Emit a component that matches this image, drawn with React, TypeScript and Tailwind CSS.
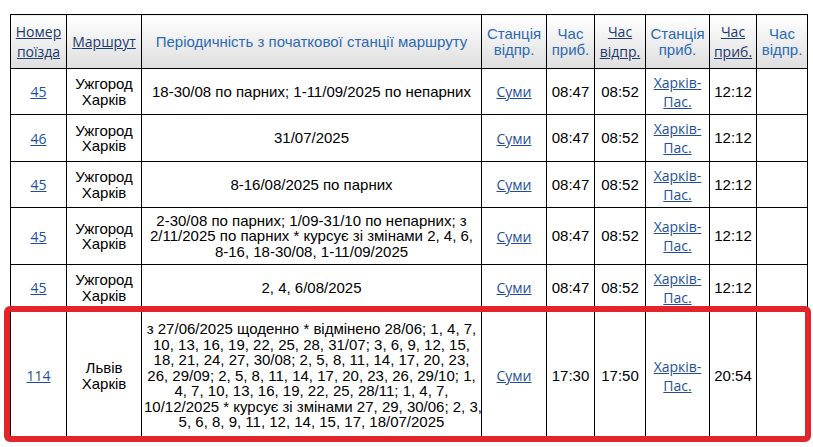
import React from "react";

const ARIAL = "font-['Liberation_Sans',Arial,sans-serif]";
const LINK = "font-['Open_Sans','Noto_Sans',sans-serif] text-[14px] leading-[19px] underline text-[#1f4f9b]";
const HLINK = "font-['Open_Sans','Noto_Sans',sans-serif] text-[14px] leading-[20px] underline text-[#1c3a6c]";
const HTEXT = `${ARIAL} text-[15px] leading-[15.5px] text-[#2d6ab3]`;

const th = "border border-black bg-gradient-to-b from-white to-[#dedede] font-normal text-center align-middle px-[2px]";
const td = "border border-black text-center align-middle px-[2px]";

type Row = {
  num: string;
  route: string[];
  period: string[];
  dep: string;
  t1: string;
  t2: string;
  t3: string;
  h: string;
};

const rows: Row[] = [
  { num: "45", route: ["Ужгород", "Харків"], period: ["18-30/08 по парних; 1-11/09/2025 по непарних"], dep: "Суми", t1: "08:47", t2: "08:52", t3: "12:12", h: "h-[46px]" },
  { num: "46", route: ["Ужгород", "Харків"], period: ["31/07/2025"], dep: "Суми", t1: "08:47", t2: "08:52", t3: "12:12", h: "h-[47px]" },
  { num: "45", route: ["Ужгород", "Харків"], period: ["8-16/08/2025 по парних"], dep: "Суми", t1: "08:47", t2: "08:52", t3: "12:12", h: "h-[46px]" },
  {
    num: "45",
    route: ["Ужгород", "Харків"],
    period: [
      "2-30/08 по парних; 1/09-31/10 по непарних; з",
      "2/11/2025 по парних * курсує зі змінами 2, 4, 6,",
      "8-16, 18-30/08, 1-11/09/2025",
    ],
    dep: "Суми",
    t1: "08:47",
    t2: "08:52",
    t3: "12:12",
    h: "h-[57px]",
  },
  { num: "45", route: ["Ужгород", "Харків"], period: ["2, 4, 6/08/2025"], dep: "Суми", t1: "08:47", t2: "08:52", t3: "12:12", h: "h-[46px]" },
  {
    num: "114",
    route: ["Львів", "Харків"],
    period: [
      "з 27/06/2025 щоденно * відмінено 28/06; 1, 4, 7,",
      "10, 13, 16, 19, 22, 25, 28, 31/07; 3, 6, 9, 12, 15,",
      "18, 21, 24, 27, 30/08; 2, 5, 8, 11, 14, 17, 20, 23,",
      "26, 29/09; 2, 5, 8, 11, 14, 17, 20, 23, 26, 29/10; 1,",
      "4, 7, 10, 13, 16, 19, 22, 25, 28/11; 1, 4, 7,",
      "10/12/2025 * курсує зі змінами 27, 29, 30/06; 2, 3,",
      "5, 6, 8, 9, 11, 12, 14, 15, 17, 18/07/2025",
    ],
    dep: "Суми",
    t1: "17:30",
    t2: "17:50",
    t3: "20:54",
    h: "h-[130px]",
  },
];

function Lines({ lines }: { lines: string[] }) {
  return (
    <>
      {lines.map((l, i) => (
        <React.Fragment key={i}>
          {i > 0 && <br />}
          {l}
        </React.Fragment>
      ))}
    </>
  );
}

export default function App() {
  return (
    <div className="relative w-[813px] h-[447px] bg-white overflow-hidden">
      <div className="pt-[14px] pl-[10px]">
        <table className={`border-collapse table-fixed w-[797px] ${ARIAL} text-[15px] leading-[15.5px] text-black`}>
          <colgroup>
            <col className="w-[56px]" />
            <col className="w-[75px]" />
            <col className="w-[340px]" />
            <col className="w-[65px]" />
            <col className="w-[48px]" />
            <col className="w-[51px]" />
            <col className="w-[64px]" />
            <col className="w-[47px]" />
            <col className="w-[51px]" />
          </colgroup>
          <thead>
            <tr className="h-[54px]">
              <th className={th}>
                <a className={HLINK} href="#">Номер<br />поїзда</a>
              </th>
              <th className={th}>
                <a className={HLINK} href="#">Маршрут</a>
              </th>
              <th className={th}>
                <span className={HTEXT}>Періодичність з початкової станції маршруту</span>
              </th>
              <th className={th}>
                <span className={HTEXT}>Станція<br />відпр.</span>
              </th>
              <th className={th}>
                <span className={HTEXT}>Час<br />приб.</span>
              </th>
              <th className={th}>
                <a className={HLINK} href="#">Час<br />відпр.</a>
              </th>
              <th className={th}>
                <span className={HTEXT}>Станція<br />приб.</span>
              </th>
              <th className={th}>
                <a className={HLINK} href="#">Час<br />приб.</a>
              </th>
              <th className={th}>
                <span className={HTEXT}>Час<br />відпр.</span>
              </th>
            </tr>
          </thead>
          <tbody>
            {rows.map((r, i) => (
              <tr key={i} className={r.h}>
                <td className={td}>
                  <a className={LINK} href="#">{r.num}</a>
                </td>
                <td className={td}>
                  <Lines lines={r.route} />
                </td>
                <td className={`${td} whitespace-nowrap`}>
                  <Lines lines={r.period} />
                </td>
                <td className={td}>
                  <a className={LINK} href="#">{r.dep}</a>
                </td>
                <td className={td}>{r.t1}</td>
                <td className={td}>{r.t2}</td>
                <td className={td}>
                  <a className={LINK} href="#">Харків-<br />Пас.</a>
                </td>
                <td className={td}>{r.t3}</td>
                <td className={td}></td>
              </tr>
            ))}
          </tbody>
        </table>
      </div>
      <div className="absolute left-[4px] top-[306px] w-[807px] h-[136px] border-[6px] border-[#e3252b] rounded-[6px] pointer-events-none" />
    </div>
  );
}
